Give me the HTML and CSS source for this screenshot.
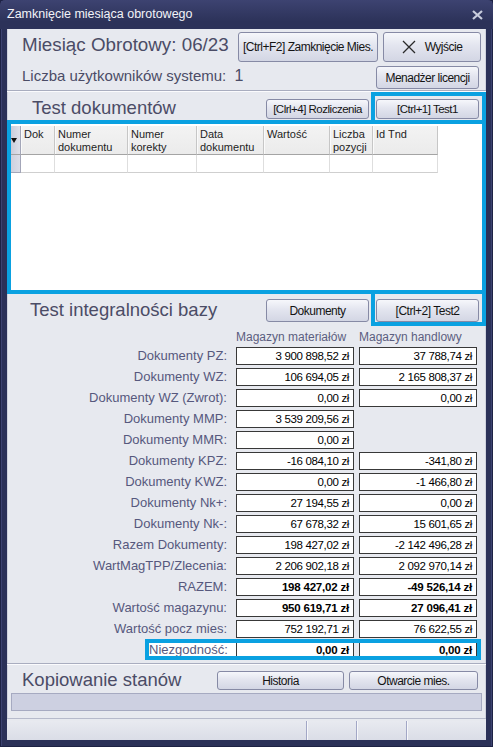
FILE: index.html
```html
<!DOCTYPE html>
<html lang="pl">
<head>
<meta charset="utf-8">
<title>Zamknięcie miesiąca obrotowego</title>
<link rel="stylesheet" href="styles.css">
</head>
<body>
<div class="window">
  <div class="titlebar">
    <span class="wtitle">Zamknięcie miesiąca obrotowego</span>
    <svg class="wclose" width="11" height="10" viewBox="0 0 11 10"><path d="M1 1 L10 9 M10 1 L1 9" stroke="#c9cddd" stroke-width="2.2" fill="none"/></svg>
  </div>
  <div class="client">
    <section class="head">
      <div class="month">Miesiąc Obrotowy: 06/23</div>
      <button class="btn btn-close">[Ctrl+F2] Zamknięcie Mies.</button>
      <button class="btn btn-exit"><svg width="14" height="14" viewBox="0 0 14 14"><path d="M1 1 L13 13 M13 1 L1 13" stroke="#2a2a2a" stroke-width="1.3" fill="none"/></svg><span>Wyjście</span></button>
      <div class="users">Liczba użytkowników systemu: <span class="num">1</span></div>
      <button class="btn btn-lic">Menadżer licencji</button>
    </section>

    <section class="sec-head docs-head">
      <h2 class="stitle t-docs">Test dokumentów</h2>
      <button class="btn btn-sm">[Clrl+4] Rozliczenia</button>
      <button class="btn btn-sm">[Ctrl+1] Test1</button>
    </section>

    <section class="grid-wrap">
      <div class="dgrid">
        <div class="hc ind"><svg width="6" height="5" viewBox="0 0 6 5"><path d="M0 0 H6 L3 5 Z" fill="#111"/></svg></div>
        <div class="hc">Dok</div>
        <div class="hc">Numer<br>dokumentu</div>
        <div class="hc">Numer<br>korekty</div>
        <div class="hc">Data<br>dokumentu</div>
        <div class="hc">Wartość</div>
        <div class="hc">Liczba<br>pozycji</div>
        <div class="hc">Id Tnd</div>
        <div class="dc ind"></div>
        <div class="dc"></div>
        <div class="dc"></div>
        <div class="dc"></div>
        <div class="dc"></div>
        <div class="dc"></div>
        <div class="dc"></div>
        <div class="dc"></div>
      </div>
    </section>

    <section class="integ">
      <div class="sec-head integ-head">
        <h2 class="stitle t-integ">Test integralności bazy</h2>
        <button class="btn btn-md">Dokumenty</button>
        <button class="btn btn-md">[Ctrl+2] Test2</button>
      </div>
      <div class="vals">
        <div></div><div class="ch">Magazyn materiałów</div><div class="ch">Magazyn handlowy</div>

        <div class="lbl">Dokumenty PZ:</div><div class="v">3 900 898,52 zł</div><div class="v">37 788,74 zł</div>
        <div class="lbl">Dokumenty WZ:</div><div class="v">106 694,05 zł</div><div class="v">2 165 808,37 zł</div>
        <div class="lbl">Dokumenty WZ (Zwrot):</div><div class="v">0,00 zł</div><div class="v">0,00 zł</div>
        <div class="lbl">Dokumenty MMP:</div><div class="v">3 539 209,56 zł</div><div></div>
        <div class="lbl">Dokumenty MMR:</div><div class="v">0,00 zł</div><div></div>
        <div class="lbl">Dokumenty KPZ:</div><div class="v">-16 084,10 zł</div><div class="v">-341,80 zł</div>
        <div class="lbl">Dokumenty KWZ:</div><div class="v">0,00 zł</div><div class="v">-1 466,80 zł</div>
        <div class="lbl">Dokumenty Nk+:</div><div class="v">27 194,55 zł</div><div class="v">0,00 zł</div>
        <div class="lbl">Dokumenty Nk-:</div><div class="v">67 678,32 zł</div><div class="v">15 601,65 zł</div>
        <div class="lbl">Razem Dokumenty:</div><div class="v">198 427,02 zł</div><div class="v">-2 142 496,28 zł</div>
        <div class="lbl">WartMagTPP/Zlecenia:</div><div class="v">2 206 902,18 zł</div><div class="v">2 092 970,14 zł</div>
        <div class="lbl">RAZEM:</div><div class="v b">198 427,02 zł</div><div class="v b">-49 526,14 zł</div>
        <div class="lbl">Wartość magazynu:</div><div class="v b">950 619,71 zł</div><div class="v b">27 096,41 zł</div>
        <div class="lbl">Wartość pocz mies:</div><div class="v">752 192,71 zł</div><div class="v">76 622,55 zł</div>
        <div class="lbl lbl-hl">Niezgodność:</div><div class="v b">0,00 zł</div><div class="v b">0,00 zł</div>
      </div>
    </section>

    <section class="copy">
      <div class="sec-head copy-head">
        <h2 class="stitle t-copy">Kopiowanie stanów</h2>
        <button class="btn btn-hist">Historia</button>
        <button class="btn btn-open">Otwarcie mies.</button>
      </div>
      <div class="progress"></div>
    </section>

    <footer class="status">
      <div class="sc sc-main"></div>
      <div class="sc"></div>
      <div class="sc"></div>
      <div class="sc sc-last"></div>
    </footer>
  </div>

  <div class="hl hl-test1"></div>
  <div class="hl hl-grid"></div>
  <div class="hl hl-test2"></div>
  <div class="hl hl-diff"></div>
</div>
</body>
</html>
```

FILE: styles.css
```css
body {
  margin: 0;
  background: #2b3158;
  font-family: "Liberation Sans", Arial, sans-serif;
}

.window {
  position: relative;
  width: 493px;
  height: 747px;
  background: #2b3158;
  display: flex;
  flex-direction: column;
  box-shadow: inset 0 0 0 1px #1d2244, inset 0 1px 0 2px #3c4270;
}

.titlebar {
  height: 29px;
  flex: none;
  display: flex;
  align-items: center;
  justify-content: space-between;
  padding: 0 10px 1px 7px;
  box-sizing: border-box;
  background: linear-gradient(#3d4371, #2c3259 75%);
  border-radius: 5px 5px 0 0;
}

.wtitle {
  color: #f2f3f8;
  font-size: 12.5px;
}

.wclose { display: block; margin-top: 1px; }

.client {
  flex: 1;
  margin: 0 7px 7px 7px;
  background: #e7e9ef;
  display: flex;
  flex-direction: column;
  box-shadow: inset 1px 0 #cfd2dd, inset -1px 0 #cfd2dd;
}

/* header */
.head {
  height: 62px;
  flex: none;
  box-sizing: border-box;
  border-bottom: 1px solid #a9adbf;
  display: grid;
  grid-template-columns: 211px 140px 98px;
  grid-template-rows: 30px 23px;
  column-gap: 5px;
  row-gap: 4px;
  padding: 3px 5px 0 15px;
}

.month {
  align-self: start;
  margin-top: 2px;
  font-size: 18.8px;
  line-height: 22px;
  color: #4b4c66;
  white-space: nowrap;
}

.users {
  align-self: start;
  margin-top: 1px;
  font-size: 15px;
  line-height: 17px;
  color: #4b4c66;
  white-space: nowrap;
}

.users .num { margin-left: 4px; font-size: 16px; }

.btn {
  font-family: "Liberation Sans", Arial, sans-serif;
  font-size: 11.5px;
  letter-spacing: -0.5px;
  color: #141414;
  border: 1px solid #868aa5;
  border-radius: 3px;
  background: linear-gradient(#f6f7fb 0%, #e3e5ef 45%, #d3d6e4 100%);
  padding: 0;
  box-sizing: border-box;
  white-space: nowrap;
  cursor: default;
}

.btn-close { height: 30px; font-size: 12px; }

.btn-exit {
  height: 30px;
  display: flex;
  align-items: center;
  justify-content: center;
  gap: 9px;
  font-size: 12px;
}
.btn-exit svg { display: block; }

.btn-lic {
  grid-column: 2 / 4;
  justify-self: end;
  width: 103px;
  height: 23px;
  margin-right: 2px;
  font-size: 12px;
}

/* section headers */
.sec-head {
  display: flex;
  align-items: flex-start;
  gap: 7px;
  padding-right: 7px;
  box-sizing: border-box;
}

.stitle {
  flex: 1;
  margin: 0;
  font-weight: normal;
  font-size: 18.5px;
  line-height: 22px;
  color: #4b4c66;
  white-space: nowrap;
}

.docs-head {
  height: 29px;
  flex: none;
  border-top: 1px solid #fbfbfd;
}
.t-docs { padding-left: 25px; margin-top: 5px; }
.btn-sm { width: 103px; height: 20px; margin-top: 7px; }

/* data grid */
.grid-wrap {
  height: 172px;
  flex: none;
  background: #fff;
  padding: 6px 0 0 1px;
  box-sizing: border-box;
}

.dgrid {
  display: grid;
  grid-template-columns: 13px 34px 73px 69px 67px 66px 43px 65px;
  grid-template-rows: 29px 18px;
  width: max-content;
  font-size: 11px;
  color: #1e1e1e;
}

.hc {
  background: linear-gradient(#f3f3f3, #ebebeb);
  border-right: 1px solid #c6c6c6;
  border-bottom: 1px solid #a4a4a4;
  box-shadow: inset 1px 0 #fafafa;
  padding: 2px 0 0 3px;
  line-height: 13px;
  box-sizing: border-box;
  white-space: nowrap;
}

.hc.ind {
  padding: 0;
  display: flex;
  align-items: center;
  justify-content: center;
  background: linear-gradient(90deg, #c3c6d6, #dfe1ea);
  border-right: 1px solid #a3a6b8;
}

.dc {
  background: #fff;
  border-right: 1px solid #dedede;
  border-bottom: 1px solid #cfcfcf;
  box-sizing: border-box;
}

.dc.ind {
  background: linear-gradient(90deg, #c9ccdb, #dcdee8);
  border-right: 1px solid #a3a6b8;
  border-bottom: 1px solid #a3a6b8;
}

/* integrity */
.integ {
  flex: none;
  padding-bottom: 4px;
}

.integ-head { height: 34px; }
.t-integ { padding-left: 23px; margin-top: 7px; }
.btn-md { width: 103px; height: 23px; margin-top: 7px; font-size: 12px; }

.vals {
  display: grid;
  grid-template-columns: 224px 118px 118px;
  grid-template-rows: 14px;
  grid-auto-rows: 18px;
  column-gap: 5px;
  row-gap: 3px;
  padding-top: 4px;
}

.ch {
  font-size: 12px;
  line-height: 14px;
  color: #5c5e80;
  white-space: nowrap;
}

.lbl {
  text-align: right;
  padding-right: 4px;
  font-size: 13px;
  line-height: 18px;
  color: #56587d;
  white-space: nowrap;
}

.lbl-hl {
  background: #fff;
  margin-left: 142px;
  margin-right: -5px;
  padding-right: 9px;
}

.v {
  border: 1px solid #383838;
  background: #fff;
  text-align: right;
  padding-right: 4px;
  font-size: 11.5px;
  line-height: 16px;
  letter-spacing: -0.35px;
  color: #000;
  box-sizing: border-box;
  white-space: nowrap;
}

.v.b { font-weight: bold; letter-spacing: -0.2px; }

/* copy */
.copy {
  flex: none;
  border-top: 1px solid #a9adbf;
  border-bottom: 1px solid #b6bacb;
  padding-bottom: 7px;
}

.copy-head {
  height: 29px;
  border-top: 1px solid #fbfbfd;
  gap: 5px;
  padding-right: 8px;
}
.t-copy { padding-left: 15px; margin-top: 4px; }
.btn-hist { width: 127px; height: 19px; margin-top: 6px; font-size: 12px; }
.btn-open { width: 129px; height: 19px; margin-top: 6px; font-size: 12px; }

.progress {
  height: 18px;
  margin: 0 4px;
  background: #cdd0e1;
  border: 1px solid #a6aac1;
  box-sizing: border-box;
}

/* status bar */
.status {
  height: 21px;
  flex: none;
  display: flex;
  box-sizing: border-box;
  border-top: 2px solid #e7e9ef;
  background: linear-gradient(#e8eaf0, #dadde7);
}

.sc {
  width: 49px;
  border-right: 1px solid #a2a7c6;
  box-shadow: 1px 0 #f6f7fa;
}
.sc-main { width: 299px; }
.sc-last { flex: 1; border-right: none; box-shadow: none; }

/* highlight overlays */
.hl {
  position: absolute;
  border: 4px solid #0aa1e1;
  box-sizing: border-box;
  pointer-events: none;
}
.hl-test1 { left: 371px; top: 92px; width: 115px; height: 32px; }
.hl-grid { left: 7px; top: 120px; width: 479px; height: 174px; }
.hl-test2 { left: 371px; top: 290px; width: 115px; height: 36px; }
.hl-diff { left: 145px; top: 639px; width: 336px; height: 21px; }
```
